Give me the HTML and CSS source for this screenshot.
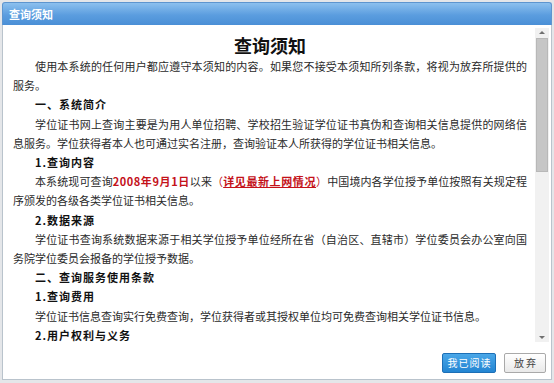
FILE: index.html
```html
<!DOCTYPE html>
<html lang="zh-CN">
<head>
    <meta charset="UTF-8">
    <title>查询须知</title>
    <link rel="stylesheet" href="styles.css">
</head>
<body>
    <div class="dialog">
        <div class="titlebar">查询须知</div>

        <div class="main">
            <div class="content">
                <h1 class="doc-title">查询须知</h1>
                <p>使用本系统的任何用户都应遵守本须知的内容。如果您不接受本须知所列条款，将视为放弃所提供的服务。</p>
                <p class="head">一、系统简介</p>
                <p>学位证书网上查询主要是为用人单位招聘、学校招生验证学位证书真伪和查询相关信息提供的网络信息服务。学位获得者本人也可通过实名注册，查询验证本人所获得的学位证书相关信息。</p>
                <p class="head">1.查询内容</p>
                <p>本系统现可查询<span class="red">2008年9月1日</span>以来<span class="paren">（<a class="link">详见最新上网情况</a>）</span>中国境内各学位授予单位按照有关规定程序颁发的各级各类学位证书相关信息。</p>
                <p class="head">2.数据来源</p>
                <p>学位证书查询系统数据来源于相关学位授予单位经所在省（自治区、直辖市）学位委员会办公室向国务院学位委员会报备的学位授予数据。</p>
                <p class="head">二、查询服务使用条款</p>
                <p class="head">1.查询费用</p>
                <p>学位证书信息查询实行免费查询，学位获得者或其授权单位均可免费查询相关学位证书信息。</p>
                <p class="head">2.用户权利与义务</p>
            </div>

            <div class="scrollbar">
                <div class="arrow up"></div>
                <div class="track">
                    <div class="thumb"></div>
                </div>
                <div class="arrow down"></div>
            </div>
        </div>

        <div class="footer">
            <button class="btn primary">我已阅读</button>
            <button class="btn">放弃</button>
        </div>
    </div>
</body>
</html>
```

FILE: styles.css
```css
html, body {
    margin: 0;
    height: 100%;
}

body {
    background: #e4e6e9;
    font-family: "Noto Sans CJK SC", "Liberation Sans", sans-serif;
    color: #2a2a2a;
}

.dialog {
    height: 100%;
    box-sizing: border-box;
    padding: 2px 2px 3px 2px;
    display: flex;
    flex-direction: column;
}

.titlebar {
    height: 22px;
    line-height: 22px;
    padding-left: 6px;
    font-size: 11px;
    font-weight: bold;
    color: #fff;
    background: linear-gradient(#8cc0ee, #5b9ddf 55%, #4a8fd6);
    border: 1px solid #5d95cf;
    border-bottom: none;
    border-radius: 3px 3px 0 0;
}

.main {
    flex: 1;
    display: flex;
    background: #fff;
    border-left: 1px solid #b9c3cc;
    border-right: 1px solid #b9c3cc;
    min-height: 0;
}

.content {
    flex: 1;
    overflow: hidden;
    padding: 8px 8px 0 10px;
    font-size: 11px;
    line-height: 19.2px;
}

.doc-title {
    margin: 0;
    text-align: center;
    font-size: 18px;
    line-height: 24px;
    font-weight: bold;
    color: #111;
}

.content p {
    margin: 0;
    text-indent: 2em;
    text-align: justify;
}

.content p.head {
    font-weight: bold;
    letter-spacing: 1px;
    color: #111;
}

.red {
    color: #c4121a;
    font-weight: bold;
    letter-spacing: 0.5px;
}

.paren {
    color: #c4121a;
}

.link {
    color: #c4121a;
    font-weight: bold;
    letter-spacing: 0.5px;
    text-decoration: underline;
}

.scrollbar {
    width: 14px;
    margin: 3px 2px 6px 0;
    display: flex;
    flex-direction: column;
    background: #f1f1f1;
}

.arrow {
    height: 9px;
    position: relative;
}

.arrow::after {
    content: "";
    position: absolute;
    left: 4px;
    border-left: 3px solid transparent;
    border-right: 3px solid transparent;
}

.arrow.up::after {
    top: 3px;
    border-bottom: 3px solid #707070;
}

.arrow.down::after {
    top: 3px;
    border-top: 3px solid #707070;
}

.track {
    flex: 1;
    padding: 1px;
}

.thumb {
    height: 132px;
    background: #c6c6c6;
    border: 1px solid #b8b8b8;
}

.footer {
    height: 29px;
    display: flex;
    justify-content: flex-end;
    align-items: center;
    gap: 8px;
    padding: 0 5px 2px 0;
    background: #fff;
    border: 1px solid #b9c3cc;
    border-top: none;
}

.btn {
    width: 42px;
    height: 20px;
    padding: 0;
    white-space: nowrap;
    font-family: "Noto Sans CJK SC", sans-serif;
    font-size: 10px;
    letter-spacing: 2px;
    text-indent: 2px;
    color: #444;
    background: linear-gradient(#ffffff, #e9e9e9);
    border: 1px solid #a9a9a9;
    border-radius: 2px;
}

.btn.primary {
    width: 54px;
    letter-spacing: 1px;
    text-indent: 1px;
    color: #fff;
    background: linear-gradient(#4aa7e8, #2385d2);
    border-color: #1d6fb6;
}
```
